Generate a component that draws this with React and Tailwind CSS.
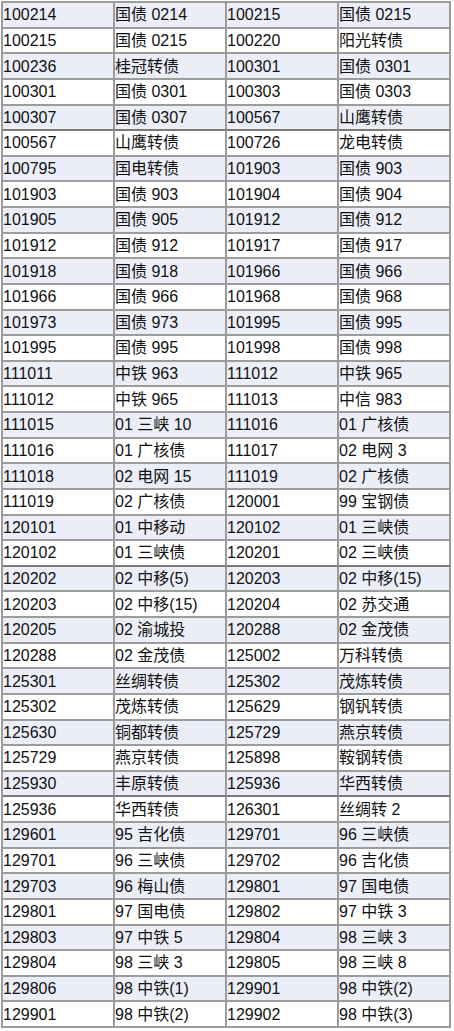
import React from "react";

const rows = [
  ["100214", "国债 0214", "100215", "国债 0215"],
  ["100215", "国债 0215", "100220", "阳光转债"],
  ["100236", "桂冠转债", "100301", "国债 0301"],
  ["100301", "国债 0301", "100303", "国债 0303"],
  ["100307", "国债 0307", "100567", "山鹰转债"],
  ["100567", "山鹰转债", "100726", "龙电转债"],
  ["100795", "国电转债", "101903", "国债 903"],
  ["101903", "国债 903", "101904", "国债 904"],
  ["101905", "国债 905", "101912", "国债 912"],
  ["101912", "国债 912", "101917", "国债 917"],
  ["101918", "国债 918", "101966", "国债 966"],
  ["101966", "国债 966", "101968", "国债 968"],
  ["101973", "国债 973", "101995", "国债 995"],
  ["101995", "国债 995", "101998", "国债 998"],
  ["111011", "中铁 963", "111012", "中铁 965"],
  ["111012", "中铁 965", "111013", "中信 983"],
  ["111015", "01 三峡 10", "111016", "01 广核债"],
  ["111016", "01 广核债", "111017", "02 电网 3"],
  ["111018", "02 电网 15", "111019", "02 广核债"],
  ["111019", "02 广核债", "120001", "99 宝钢债"],
  ["120101", "01 中移动", "120102", "01 三峡债"],
  ["120102", "01 三峡债", "120201", "02 三峡债"],
  ["120202", "02 中移(5)", "120203", "02 中移(15)"],
  ["120203", "02 中移(15)", "120204", "02 苏交通"],
  ["120205", "02 渝城投", "120288", "02 金茂债"],
  ["120288", "02 金茂债", "125002", "万科转债"],
  ["125301", "丝绸转债", "125302", "茂炼转债"],
  ["125302", "茂炼转债", "125629", "钢钒转债"],
  ["125630", "铜都转债", "125729", "燕京转债"],
  ["125729", "燕京转债", "125898", "鞍钢转债"],
  ["125930", "丰原转债", "125936", "华西转债"],
  ["125936", "华西转债", "126301", "丝绸转 2"],
  ["129601", "95 吉化债", "129701", "96 三峡债"],
  ["129701", "96 三峡债", "129702", "96 吉化债"],
  ["129703", "96 梅山债", "129801", "97 国电债"],
  ["129801", "97 国电债", "129802", "97 中铁 3"],
  ["129803", "97 中铁 5", "129804", "98 三峡 3"],
  ["129804", "98 三峡 3", "129805", "98 三峡 8"],
  ["129806", "98 中铁(1)", "129901", "98 中铁(2)"],
  ["129901", "98 中铁(2)", "129902", "98 中铁(3)"],
];

const darkRows = [4, 21, 30];

export default function App() {
  return (
    <div className="w-[454px] h-[1031px] bg-white pt-[1px] pl-[1px]">
      <div
        className="w-[450px] grid grid-cols-4 border-t-2 border-l-2 border-[#9c9c9c] text-[16px] text-[#111111]"
        style={{ fontFamily: '"Liberation Sans", "Noto Sans CJK SC", sans-serif' }}
      >
        {rows.map((r, i) =>
          r.map((c, j) => (
            <div
              key={i + "-" + j}
              className={
                "h-[25.625px] border-r-2 border-r-[#9c9c9c] border-b-2 flex items-center pt-[1px] whitespace-nowrap overflow-hidden leading-none " +
                (darkRows.includes(i) ? "border-b-[#7a7a7a] " : "border-b-[#9c9c9c] ") +
                (i % 2 === 0 ? "bg-[#eceef7]" : "bg-white")
              }
            >
              {c}
            </div>
          ))
        )}
      </div>
    </div>
  );
}
